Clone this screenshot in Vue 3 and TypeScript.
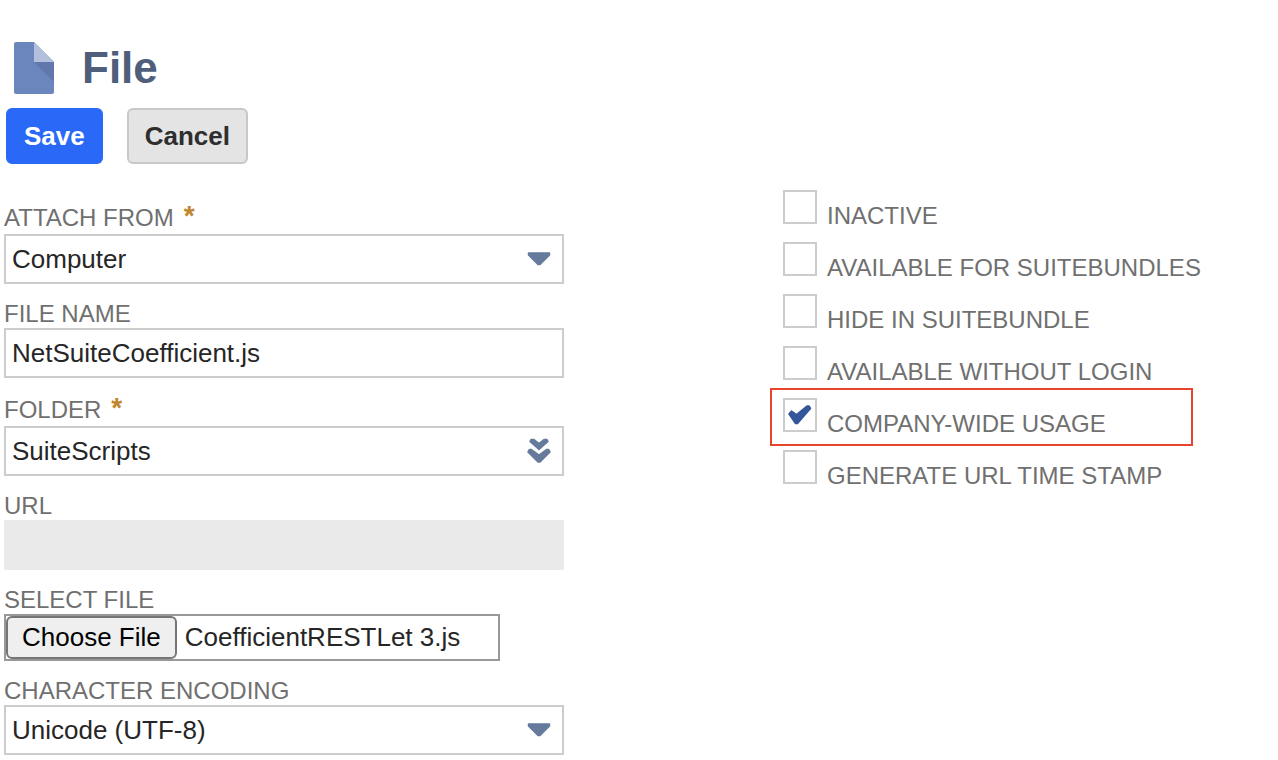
<script setup lang="ts">
import { onMounted, ref } from 'vue'

interface Flag {
  id: string
  label: string
  checked: boolean
  highlighted?: boolean
}

const attachFrom = ref('Computer')
const fileName = ref('NetSuiteCoefficient.js')
const folder = ref('SuiteScripts')
const url = ref('')
const encoding = ref('Unicode (UTF-8)')
const fileInput = ref<HTMLInputElement | null>(null)

const flags = ref<Flag[]>([
  { id: 'inactive', label: 'INACTIVE', checked: false },
  { id: 'bundles', label: 'AVAILABLE FOR SUITEBUNDLES', checked: false },
  { id: 'hide', label: 'HIDE IN SUITEBUNDLE', checked: false },
  { id: 'nologin', label: 'AVAILABLE WITHOUT LOGIN', checked: false },
  { id: 'company', label: 'COMPANY-WIDE USAGE', checked: true, highlighted: true },
  { id: 'timestamp', label: 'GENERATE URL TIME STAMP', checked: false },
])

onMounted(() => {
  if (!fileInput.value) return
  const transfer = new DataTransfer()
  transfer.items.add(new File([''], 'CoefficientRESTLet 3.js'))
  fileInput.value.files = transfer.files
})
</script>

<template>
  <form class="page" @submit.prevent>
    <header class="heading">
      <svg class="file-icon" viewBox="0 0 40 52" aria-hidden="true">
        <path d="M2 0H20L40 20V50a2 2 0 0 1-2 2H2a2 2 0 0 1-2-2V2a2 2 0 0 1 2-2z" fill="#6a86bd" />
        <path d="M20 20H40V40z" fill="#6078ab" />
        <path d="M20 0L40 20H20z" fill="#b2c0dc" />
      </svg>
      <h1>File</h1>
    </header>

    <div class="actions">
      <button type="submit" class="btn primary">Save</button>
      <button type="button" class="btn">Cancel</button>
    </div>

    <div class="columns">
      <div class="fields">
        <div class="field">
          <label class="required" for="attach">ATTACH FROM <span class="star">*</span></label>
          <div class="control">
            <select id="attach" v-model="attachFrom" class="box">
              <option>Computer</option>
            </select>
            <svg class="marker" viewBox="0 0 24 26" aria-hidden="true">
              <path d="M1.5 7H22.5V9L13 18.5H11L1.5 9z" fill="#667a9c" stroke="#667a9c" stroke-width="1.5" stroke-linejoin="round" />
            </svg>
          </div>
        </div>

        <div class="field">
          <label for="name">FILE NAME</label>
          <input id="name" v-model="fileName" class="box" type="text" />
        </div>

        <div class="field">
          <label class="required" for="folder">FOLDER <span class="star">*</span></label>
          <div class="control">
            <input id="folder" v-model="folder" class="box" type="text" />
            <button class="marker" type="button" aria-label="Choose folder">
              <svg viewBox="0 0 24 26" aria-hidden="true">
                <g fill="#667a9c" stroke="#667a9c" stroke-width="1.5" stroke-linejoin="round">
                  <path d="M4 1.5H7L12 5.5L17 1.5H20L21 3.5L12 11.5L3 3.5z" />
                  <path d="M2.5 11.5H4.5L12 17L19.5 11.5H21.5L23 14L13 24H11L1 14z" />
                </g>
              </svg>
            </button>
          </div>
        </div>

        <div class="field">
          <label for="url">URL</label>
          <input id="url" v-model="url" class="box readonly" type="text" readonly />
        </div>

        <div class="field">
          <label for="upload">SELECT FILE</label>
          <input id="upload" ref="fileInput" class="upload" type="file" />
        </div>

        <div class="field">
          <label for="encoding">CHARACTER ENCODING</label>
          <div class="control">
            <select id="encoding" v-model="encoding" class="box">
              <option>Unicode (UTF-8)</option>
            </select>
            <svg class="marker" viewBox="0 0 24 26" aria-hidden="true">
              <path d="M1.5 7H22.5V9L13 18.5H11L1.5 9z" fill="#667a9c" stroke="#667a9c" stroke-width="1.5" stroke-linejoin="round" />
            </svg>
          </div>
        </div>
      </div>

      <div class="flags">
        <div v-for="flag in flags" :key="flag.id" class="flag" :class="{ highlighted: flag.highlighted }">
          <span class="tick">
            <input :id="flag.id" v-model="flag.checked" type="checkbox" />
            <svg v-if="flag.checked" viewBox="0 0 34 34" aria-hidden="true">
              <path d="M8.5 13L13.5 16.5L24 8H26L27.5 10.5L14.5 25.5H12.5L6 16z" fill="#34569a" stroke="#34569a" stroke-width="1.5" stroke-linejoin="round" />
            </svg>
          </span>
          <label :for="flag.id">{{ flag.label }}</label>
        </div>
      </div>
    </div>
  </form>
</template>

<style>
body {
  margin: 0;
  background: #fff;
}
</style>

<style scoped>
.page {
  box-sizing: border-box;
  padding: 40px 0 4px 4px;
  font-family: "Liberation Sans", Arial, sans-serif;
  color: #262626;
}

.page *,
.page *::after {
  box-sizing: border-box;
}

.heading {
  display: flex;
  align-items: center;
  gap: 28px;
  height: 56px;
  padding-left: 10px;
}

.file-icon {
  width: 40px;
  height: 52px;
}

h1 {
  margin: 0;
  font-size: 44px;
  line-height: 52px;
  color: #4f5f7b;
}

.actions {
  display: flex;
  gap: 24px;
  margin-top: 12px;
  padding-left: 2px;
}

.btn {
  height: 56px;
  padding: 0 16px;
  border: 2px solid #c8c8c8;
  border-radius: 6px;
  background: #e4e4e4;
  color: #2e2e2e;
  font: bold 26px "Liberation Sans", Arial, sans-serif;
}

.btn.primary {
  border-color: #2a69f8;
  background: #2a69f8;
  color: #fff;
}

.columns {
  display: grid;
  grid-template-columns: 779fr 495fr;
  margin-top: 26px;
}

.fields {
  display: flex;
  flex-direction: column;
  gap: 16px;
  max-width: 560px;
  padding-top: 12px;
}

.field {
  display: flex;
  flex-direction: column;
  align-items: flex-start;
}

label {
  font-size: 24px;
  line-height: 28px;
  color: #707070;
}

.required {
  display: flex;
  gap: 10px;
  line-height: 32px;
}

.star {
  font-size: 28px;
  font-weight: bold;
  line-height: 28px;
  color: #c0862b;
}

.control {
  position: relative;
  width: 100%;
}

.box {
  display: block;
  width: 100%;
  height: 50px;
  margin: 0;
  padding: 0 6px;
  border: 2px solid #ccc;
  border-radius: 0;
  outline: none;
  background: #fff;
  color: #262626;
  font: 26px "Liberation Sans", Arial, sans-serif;
  appearance: none;
}

.readonly {
  border-color: #eaeaea;
  background: #eaeaea;
}

.marker {
  position: absolute;
  top: 12px;
  right: 13px;
  width: 24px;
  height: 26px;
  padding: 0;
  border: 0;
  background: none;
  pointer-events: none;
}

.marker svg {
  display: block;
}

button.marker {
  pointer-events: auto;
}

.upload {
  width: 496px;
  max-width: 100%;
  height: 47px;
  border: 2px solid #999;
  color: #262626;
  font: 26px "Liberation Sans", Arial, sans-serif;
}

.upload::file-selector-button {
  box-sizing: border-box;
  height: 43px;
  margin: 0 8px 0 0;
  padding: 0 14px;
  border: 2px solid #767676;
  border-radius: 6px;
  background: #efefef;
  color: #000;
  font: 26px "Liberation Sans", Arial, sans-serif;
}

.flags {
  display: flex;
  flex-direction: column;
  gap: 12px;
}

.flag {
  position: relative;
  display: flex;
  gap: 10px;
  height: 40px;
}

.flag label {
  align-self: flex-end;
  white-space: nowrap;
}

.tick {
  position: relative;
  width: 34px;
  height: 34px;
}

.tick input {
  display: block;
  width: 34px;
  height: 34px;
  margin: 0;
  border: 2px solid #ccc;
  background: #fff;
  appearance: none;
}

.tick svg {
  position: absolute;
  inset: 0;
  pointer-events: none;
}

.highlighted::after {
  content: "";
  position: absolute;
  top: -10px;
  left: -13px;
  width: 423px;
  height: 58px;
  border: 2px solid #e8432c;
  pointer-events: none;
}
</style>
